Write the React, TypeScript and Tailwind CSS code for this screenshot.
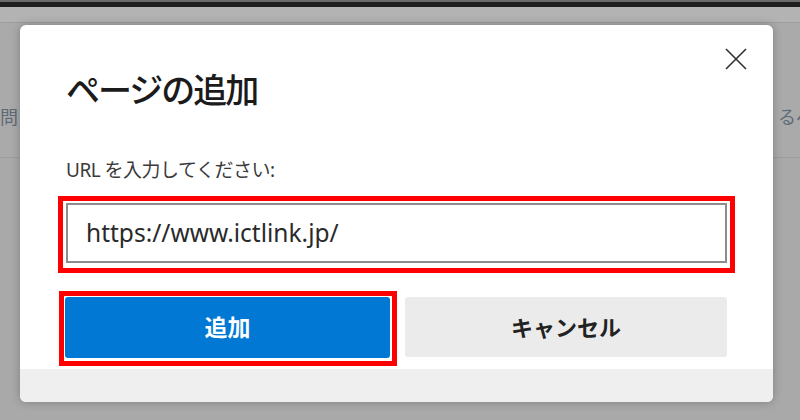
import React from "react";

export default function App() {
  const jp = { fontFamily: "'Noto Sans', 'Noto Sans CJK JP', sans-serif" } as React.CSSProperties;
  return (
    <div className="relative w-[800px] h-[420px] overflow-hidden bg-[#aaaaaa]" style={jp}>
      {/* background page (dimmed) */}
      <div className="h-[2px] bg-[#6a6a6a]" />
      <div className="h-[5px] bg-[#1e1e1e]" />
      <div className="h-[16px] bg-[#b3b3b3] border-b border-[#9d9d9d]" />
      <div className="h-[135px] border-b border-[#9c9c9c] flex items-end justify-between pb-[30px]">
        <span className="ml-[-18px] text-[18px] leading-[20px] text-[#5d6a78]">開問</span>
        <span className="mr-[-14px] text-[18px] leading-[20px] text-[#5d6a78]">るペ</span>
      </div>
      <div className="h-full bg-[#a9a9a9]" />

      {/* dialog */}
      <div className="absolute left-[20px] top-[25px] w-[753px] h-[377px] rounded-[6px] bg-white overflow-hidden flex flex-col shadow-[0_0_10px_rgba(0,0,0,0.25)]">
        <div className="flex-1 px-[46px] flex flex-col">
          <div className="flex items-start justify-between">
            <h1 className="mt-[45px] text-[34px] leading-[40px] font-medium tracking-[-2px] text-[#1b1b1b]">
              ページの追加
            </h1>
            <button className="mt-[23px] mr-[-20px] w-[22px] h-[22px]" aria-label="閉じる">
              <svg width="22" height="22" viewBox="0 0 22 22">
                <path d="M1 1 L21 21 M21 1 L1 21" stroke="#303030" strokeWidth="1.6" fill="none" />
              </svg>
            </button>
          </div>
          <label className="mt-[48px] text-[19px] leading-[24px] tracking-[-0.5px] text-[#3a3a3a]">
            URL を入力してください:
          </label>
          <div className="mt-[14px] -mx-[8px] border-[5px] border-[#ff0000] pt-[2px] pb-[5px] px-[3px]">
            <div className="h-[60px] border-2 border-[#8d8d8d] flex items-center pl-[18px]">
              <span className="text-[24.5px] leading-[30px] text-[#2a2a2a]">https://www.ictlink.jp/</span>
            </div>
          </div>
          <div className="mt-[18px] -ml-[7px] flex gap-[8px]">
            <div className="w-[338px] border-[5px] border-[#ff0000] pt-[1px] pl-[1px] pr-[2px] pb-[3px]">
              <button className="w-full h-[61px] rounded-[3px] bg-[#0078d4] text-white text-[23px] font-bold">
                追加
              </button>
            </div>
            <div className="flex-1 pt-[6px]">
              <button className="w-full h-[60px] rounded-[3px] bg-[#ebebeb] text-[#222222] text-[22px] font-bold">
                キャンセル
              </button>
            </div>
          </div>
        </div>
        <div className="h-[33px] bg-[#efefef]" />
      </div>
    </div>
  );
}
